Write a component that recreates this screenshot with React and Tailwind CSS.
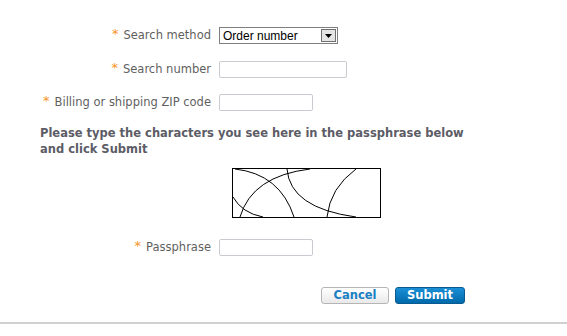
import React from "react";

const font = { fontFamily: '"DejaVu Sans", Verdana, sans-serif' };

function Label({ children }) {
  return (
    <div className="flex items-center justify-end gap-[5px] text-[11.5px] text-[#5f5f5f] whitespace-nowrap">
      <span className="text-[#f7931e] text-[13px] leading-none relative top-[-2px]">*</span>
      <span>{children}</span>
    </div>
  );
}

function TextInput({ w }) {
  return <div className={`h-[17px] border border-[#c8ccd0] rounded-[2px] bg-white ${w}`} />;
}

function Captcha() {
  return (
    <svg width="149" height="50" viewBox="0 0 149 50" className="block">
      <rect x="0.5" y="0.5" width="148" height="49" fill="white" stroke="black" />
      <g fill="none" stroke="black" strokeWidth="1">
        <path d="M3 1 Q48 6 62 49" />
        <path d="M8 49 Q20 8 78 1" />
        <path d="M1 29 Q10 45 31 49" />
        <path d="M55 1 Q58 40 124 49" />
        <path d="M124 1 Q98 20 95 49" />
      </g>
    </svg>
  );
}

export default function App() {
  return (
    <div className="w-[567px] h-[336px] bg-white relative overflow-hidden" style={font}>
      <div className="pt-[27px]">
        <div className="grid grid-cols-[211px_auto] gap-x-[8px] items-center">
          <Label>Search method</Label>
          <div className="w-[119px] h-[17px] border border-[#7f7f7f] flex items-center bg-white">
            <span className="flex-1 pl-[3px] text-[12px] text-black" style={{ fontFamily: '"Liberation Sans", Arial, sans-serif' }}>Order number</span>
            <div className="w-[15px] h-[13px] mr-[1px] border border-[#707070] bg-[#e4e4e4] flex items-center justify-center">
              <svg width="7" height="4" viewBox="0 0 7 4"><path d="M0 0H7L3.5 4Z" fill="black" /></svg>
            </div>
          </div>
        </div>
        <div className="grid grid-cols-[211px_auto] gap-x-[8px] items-center mt-[17px]">
          <Label>Search number</Label>
          <TextInput w="w-[128px]" />
        </div>
        <div className="grid grid-cols-[211px_auto] gap-x-[8px] items-center mt-[15px]">
          <Label>Billing or shipping ZIP code</Label>
          <TextInput w="w-[94px]" />
        </div>
        <p className="pl-[40px] mt-[14px] text-[11.5px] font-bold leading-[16px] text-[#5c5c66]">
          Please type the characters you see here in the passphrase below<br />and click Submit
        </p>
        <div className="pl-[232px] mt-[11px]">
          <Captcha />
        </div>
        <div className="grid grid-cols-[211px_auto] gap-x-[8px] items-center mt-[21px]">
          <Label>Passphrase</Label>
          <TextInput w="w-[94px]" />
        </div>
        <div className="flex justify-end gap-[6px] pr-[102px] mt-[31px]">
          <button className="w-[68px] h-[17px] rounded-[3px] border border-[#b5b5b5] bg-gradient-to-b from-white to-[#e9e9e9] text-[11.5px] font-bold text-[#1b7fc4] leading-none">
            Cancel
          </button>
          <button className="w-[70px] h-[17px] rounded-[3px] border border-[#0a5a92] bg-gradient-to-b from-[#1a8fd6] to-[#006aab] text-[11.5px] font-bold text-white leading-none">
            Submit
          </button>
        </div>
      </div>
      <div className="absolute left-0 right-0 top-[322px] h-[2px] bg-[#d0d0d0]" />
    </div>
  );
}
